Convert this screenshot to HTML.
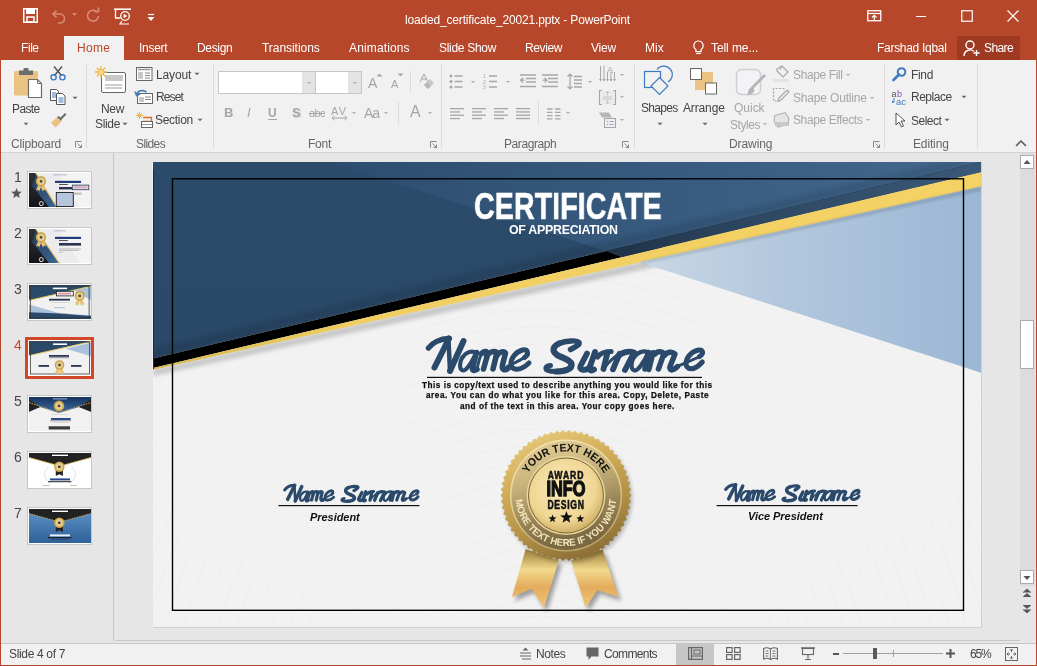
<!DOCTYPE html>
<html><head><meta charset="utf-8">
<style>
*{margin:0;padding:0;box-sizing:border-box}
html,body{width:1037px;height:666px;overflow:hidden;background:#E6E6E6;font-family:"Liberation Sans",sans-serif}
.a{position:absolute}
.t{position:absolute;white-space:nowrap;line-height:1;-webkit-font-smoothing:antialiased}
body{-webkit-font-smoothing:antialiased}
.t{will-change:transform}
svg.a{overflow:visible;will-change:transform}
</style></head>
<body>
<div class="a" style="left:0px;top:0px;width:1037px;height:60px;background:#B7472A"></div>
<div class="t" style="left:404.50px;top:14.44px;font-size:12px;color:#fff;font-weight:normal;font-style:normal;font-family:'Liberation Sans',sans-serif;letter-spacing:-0.170px;">loaded_certificate_20021.pptx - PowerPoint</div>
<svg class="a" style="left:23px;top:8px;" width="15" height="15" viewBox="0 0 15 15"><path d="M0.75 0.75h13.5v13.5h-13.5z" fill="none" stroke="#fff" stroke-width="1.5"/><rect x="3" y="1" width="9" height="5" fill="#fff"/><rect x="4" y="9" width="7" height="5" fill="none" stroke="#fff" stroke-width="1.5"/></svg>
<svg class="a" style="left:51px;top:9px;" width="16" height="13" viewBox="0 0 16 13"><path d="M2 5h7a4.5 4.5 0 0 1 0 9h-2" fill="none" stroke="#D98B77" stroke-width="1.6"/><path d="M5.5 1.5L2 5l3.5 3.5" fill="none" stroke="#D98B77" stroke-width="1.6"/></svg>
<svg class="a" style="left:72px;top:13px;" width="6" height="4" viewBox="0 0 6 4"><path d="M0 0h5l-2.5 3z" fill="#D98B77"/></svg>
<svg class="a" style="left:86px;top:8px;" width="15" height="15" viewBox="0 0 15 15"><path d="M11.5 4.5A5.5 5.5 0 1 0 12.5 8" fill="none" stroke="#D98B77" stroke-width="1.6"/><path d="M8 3.5h4.5v-4" fill="none" stroke="#D98B77" stroke-width="1.6"/></svg>
<svg class="a" style="left:114px;top:8px;" width="18" height="17" viewBox="0 0 18 17"><path d="M0 1.2h17" stroke="#fff" stroke-width="1.6"/><path d="M1.5 1v9h5" fill="none" stroke="#fff" stroke-width="1.3"/><circle cx="11" cy="8" r="4.3" fill="none" stroke="#fff" stroke-width="1.3"/><path d="M9.6 5.7v4.6l3.6-2.3z" fill="#fff"/><path d="M8 13l-2 3h9" fill="none" stroke="#fff" stroke-width="1.2"/></svg>
<svg class="a" style="left:147px;top:13px;" width="8" height="9" viewBox="0 0 8 9"><path d="M1 1.5h6" stroke="#fff" stroke-width="1.2"/><path d="M0.5 4h7l-3.5 4z" fill="#fff"/></svg>
<svg class="a" style="left:867px;top:10px;" width="15" height="12" viewBox="0 0 15 12"><rect x="0.75" y="0.75" width="13" height="10" fill="none" stroke="#fff" stroke-width="1.3"/><path d="M1 3.5h13" stroke="#fff" stroke-width="1.2"/><path d="M7.25 10V5.5M5 7.5l2.25-2.2 2.25 2.2" fill="none" stroke="#fff" stroke-width="1.2"/></svg>
<div class="a" style="left:916px;top:16px;width:10px;height:1px;background:#fff"></div>
<svg class="a" style="left:961px;top:10px;" width="12" height="12" viewBox="0 0 12 12"><rect x="0.75" y="0.75" width="10.5" height="10.5" fill="none" stroke="#fff" stroke-width="1.2"/></svg>
<svg class="a" style="left:1007px;top:10px;" width="12" height="12" viewBox="0 0 12 12"><path d="M0.5 0.5l11 11M11.5 0.5l-11 11" stroke="#fff" stroke-width="1.2"/></svg>
<div class="a" style="left:64px;top:36px;width:60px;height:25px;background:#F1F1F1"></div>
<div class="t" style="left:21.30px;top:42.34px;font-size:12px;color:#fff;font-weight:normal;font-style:normal;font-family:'Liberation Sans',sans-serif;letter-spacing:-0.434px;">File</div>
<div class="t" style="left:139.20px;top:42.34px;font-size:12px;color:#fff;font-weight:normal;font-style:normal;font-family:'Liberation Sans',sans-serif;letter-spacing:-0.285px;">Insert</div>
<div class="t" style="left:197.30px;top:42.34px;font-size:12px;color:#fff;font-weight:normal;font-style:normal;font-family:'Liberation Sans',sans-serif;letter-spacing:-0.325px;">Design</div>
<div class="t" style="left:262.00px;top:42.34px;font-size:12px;color:#fff;font-weight:normal;font-style:normal;font-family:'Liberation Sans',sans-serif;letter-spacing:-0.049px;">Transitions</div>
<div class="t" style="left:349.00px;top:42.34px;font-size:12px;color:#fff;font-weight:normal;font-style:normal;font-family:'Liberation Sans',sans-serif;letter-spacing:0.134px;">Animations</div>
<div class="t" style="left:438.60px;top:42.34px;font-size:12px;color:#fff;font-weight:normal;font-style:normal;font-family:'Liberation Sans',sans-serif;letter-spacing:-0.293px;">Slide Show</div>
<div class="t" style="left:525.00px;top:42.34px;font-size:12px;color:#fff;font-weight:normal;font-style:normal;font-family:'Liberation Sans',sans-serif;letter-spacing:-0.391px;">Review</div>
<div class="t" style="left:590.80px;top:42.34px;font-size:12px;color:#fff;font-weight:normal;font-style:normal;font-family:'Liberation Sans',sans-serif;letter-spacing:-0.198px;">View</div>
<div class="t" style="left:645.40px;top:42.34px;font-size:12px;color:#fff;font-weight:normal;font-style:normal;font-family:'Liberation Sans',sans-serif;letter-spacing:0.046px;">Mix</div>
<div class="t" style="left:710.60px;top:42.34px;font-size:12px;color:#fff;font-weight:normal;font-style:normal;font-family:'Liberation Sans',sans-serif;letter-spacing:-0.081px;">Tell me...</div>
<div class="t" style="left:877.00px;top:42.34px;font-size:12px;color:#fff;font-weight:normal;font-style:normal;font-family:'Liberation Sans',sans-serif;letter-spacing:-0.290px;">Farshad Iqbal</div>
<div class="t" style="left:77.20px;top:42.34px;font-size:12px;color:#B7472A;font-weight:normal;font-style:normal;font-family:'Liberation Sans',sans-serif;letter-spacing:0.273px;">Home</div>
<svg class="a" style="left:692px;top:40px;" width="13" height="15" viewBox="0 0 13 15"><path d="M6.5 1a4.6 4.6 0 0 0-2.6 8.4v2.2h5.2V9.4A4.6 4.6 0 0 0 6.5 1z" fill="none" stroke="#fff" stroke-width="1.2"/><path d="M4.2 13.5h4.6" stroke="#fff" stroke-width="1.2"/></svg>
<div class="a" style="left:957px;top:36px;width:63px;height:24px;background:#9E3A21"></div>
<svg class="a" style="left:963px;top:40px;" width="18" height="17" viewBox="0 0 18 17"><circle cx="7" cy="5" r="4" fill="none" stroke="#fff" stroke-width="1.4"/><path d="M1 16a6 6 0 0 1 10-4.5" fill="none" stroke="#fff" stroke-width="1.4"/><path d="M13.5 10v6M10.5 13h6" stroke="#fff" stroke-width="1.4"/></svg>
<div class="t" style="left:983.50px;top:42.34px;font-size:12px;color:#fff;font-weight:normal;font-style:normal;font-family:'Liberation Sans',sans-serif;letter-spacing:-0.604px;">Share</div>
<div class="a" style="left:1px;top:60px;width:1035px;height:93px;background:#F1F1F1;border-bottom:1px solid #D4D4D4"></div>
<div class="a" style="left:86px;top:64px;width:1px;height:84px;background:#DADADA"></div>
<div class="a" style="left:213px;top:64px;width:1px;height:84px;background:#DADADA"></div>
<div class="a" style="left:441px;top:64px;width:1px;height:84px;background:#DADADA"></div>
<div class="a" style="left:634px;top:64px;width:1px;height:84px;background:#DADADA"></div>
<div class="a" style="left:884px;top:64px;width:1px;height:84px;background:#DADADA"></div>
<div class="a" style="left:977px;top:64px;width:1px;height:84px;background:#DADADA"></div>
<div class="t" style="left:10.50px;top:137.84px;font-size:12px;color:#666;font-weight:normal;font-style:normal;font-family:'Liberation Sans',sans-serif;letter-spacing:-0.151px;">Clipboard</div>
<svg class="a" style="left:74.5px;top:140.5px;" width="8" height="8" viewBox="0 0 8 8"><path d="M0.5 6.5v-6h6" fill="none" stroke="#888" stroke-width="1"/><path d="M2.5 2.5l4 4M3.5 6.5h3v-3" fill="none" stroke="#888" stroke-width="1"/></svg>
<div class="t" style="left:135.50px;top:137.84px;font-size:12px;color:#666;font-weight:normal;font-style:normal;font-family:'Liberation Sans',sans-serif;letter-spacing:-0.597px;">Slides</div>
<div class="t" style="left:307.60px;top:137.84px;font-size:12px;color:#666;font-weight:normal;font-style:normal;font-family:'Liberation Sans',sans-serif;letter-spacing:-0.253px;">Font</div>
<svg class="a" style="left:430px;top:140.5px;" width="8" height="8" viewBox="0 0 8 8"><path d="M0.5 6.5v-6h6" fill="none" stroke="#888" stroke-width="1"/><path d="M2.5 2.5l4 4M3.5 6.5h3v-3" fill="none" stroke="#888" stroke-width="1"/></svg>
<div class="t" style="left:503.50px;top:137.84px;font-size:12px;color:#666;font-weight:normal;font-style:normal;font-family:'Liberation Sans',sans-serif;letter-spacing:-0.427px;">Paragraph</div>
<svg class="a" style="left:622px;top:140.5px;" width="8" height="8" viewBox="0 0 8 8"><path d="M0.5 6.5v-6h6" fill="none" stroke="#888" stroke-width="1"/><path d="M2.5 2.5l4 4M3.5 6.5h3v-3" fill="none" stroke="#888" stroke-width="1"/></svg>
<div class="t" style="left:729.00px;top:137.84px;font-size:12px;color:#666;font-weight:normal;font-style:normal;font-family:'Liberation Sans',sans-serif;letter-spacing:-0.088px;">Drawing</div>
<svg class="a" style="left:872.5px;top:140.5px;" width="8" height="8" viewBox="0 0 8 8"><path d="M0.5 6.5v-6h6" fill="none" stroke="#888" stroke-width="1"/><path d="M2.5 2.5l4 4M3.5 6.5h3v-3" fill="none" stroke="#888" stroke-width="1"/></svg>
<div class="t" style="left:912.80px;top:137.84px;font-size:12px;color:#666;font-weight:normal;font-style:normal;font-family:'Liberation Sans',sans-serif;letter-spacing:-0.142px;">Editing</div>
<svg class="a" style="left:1015px;top:140px;" width="12" height="8" viewBox="0 0 12 8"><path d="M1 6l5-5 5 5" fill="none" stroke="#555" stroke-width="1.5"/></svg>
<svg class="a" style="left:13px;top:67px;" width="30" height="32" viewBox="0 0 30 32"><rect x="1" y="4" width="24" height="24.5" rx="1.5" fill="#EAC282"/><path d="M6 3.5h14v4.5h-14z" fill="#6D6D6D"/><rect x="10.5" y="1" width="5" height="4" rx="1" fill="#6D6D6D"/><path d="M15.5 12.5h9l4 4v14h-13z" fill="#fff" stroke="#6D6D6D" stroke-width="1.2"/><path d="M24.5 12.5v4h4" fill="none" stroke="#6D6D6D" stroke-width="1"/></svg>
<div class="t" style="left:12.40px;top:102.74px;font-size:12px;color:#444;font-weight:normal;font-style:normal;font-family:'Liberation Sans',sans-serif;letter-spacing:-0.617px;">Paste</div>
<svg class="a" style="left:21.5px;top:121px;" width="8" height="6" viewBox="0 0 8 6"><path d="M1.5 1.75h5.0l-2.5 2.5z" fill="#666"/></svg>
<svg class="a" style="left:50px;top:66px;" width="16" height="15" viewBox="0 0 16 15"><path d="M4 0.5l7.5 9M12 0.5l-7.5 9" stroke="#555" stroke-width="1.5"/><circle cx="3.6" cy="11.3" r="2.6" fill="none" stroke="#3E7AC0" stroke-width="1.4"/><circle cx="12.4" cy="11.3" r="2.6" fill="none" stroke="#3E7AC0" stroke-width="1.4"/></svg>
<svg class="a" style="left:50px;top:89px;" width="16" height="16" viewBox="0 0 16 16"><path d="M0.5 0.5h6l2 2v9h-8z" fill="#fff" stroke="#555" stroke-width="1"/><path d="M6.5 4.5h6l2.5 2.5v8.5h-8.5z" fill="#fff" stroke="#555" stroke-width="1"/><path d="M2 4h4M2 6h4M2 8h4M8.5 9h5M8.5 11h5M8.5 13h5" stroke="#3E7AC0" stroke-width="1"/></svg>
<svg class="a" style="left:70.5px;top:95px;" width="8" height="6" viewBox="0 0 8 6"><path d="M1.5 1.75h5.0l-2.5 2.5z" fill="#666"/></svg>
<svg class="a" style="left:50px;top:112px;" width="17" height="16" viewBox="0 0 17 16"><path d="M10 6l5-5 1.5 1.5-5 5z" fill="#6D6D6D"/><path d="M1 11l6-6 4.5 4.5-6 6z" fill="#EAC282"/><path d="M7 5l2-1 3 3-1 2z" fill="#6D6D6D"/></svg>
<svg class="a" style="left:95px;top:66px;" width="32" height="28" viewBox="0 0 32 28"><rect x="6.5" y="6.5" width="24" height="20" rx="1.5" fill="#fff" stroke="#666" stroke-width="1"/><rect x="10" y="9" width="18" height="6" fill="#C8C8C8"/><path d="M10 19h17M10 22h17" stroke="#999" stroke-width="1"/><g stroke="#F0B74A" stroke-width="1.3"><path d="M6 0v12M0 6h12M1.8 1.8l8.4 8.4M10.2 1.8l-8.4 8.4"/></g><circle cx="6" cy="6" r="3" fill="#F7D58E" stroke="#F0B74A"/></svg>
<div class="t" style="left:100.50px;top:102.84px;font-size:12px;color:#444;font-weight:normal;font-style:normal;font-family:'Liberation Sans',sans-serif;letter-spacing:-0.335px;">New</div>
<div class="t" style="left:95.00px;top:118.34px;font-size:12px;color:#444;font-weight:normal;font-style:normal;font-family:'Liberation Sans',sans-serif;letter-spacing:-0.337px;">Slide</div>
<svg class="a" style="left:121px;top:121px;" width="8" height="6" viewBox="0 0 8 6"><path d="M1.5 1.75h5.0l-2.5 2.5z" fill="#666"/></svg>
<svg class="a" style="left:136px;top:67px;" width="17" height="14" viewBox="0 0 17 14"><rect x="0.5" y="0.5" width="15.5" height="13" fill="#fff" stroke="#666" stroke-width="1"/><path d="M2 2.5h12.5" stroke="#999" stroke-width="1.5"/><rect x="2" y="5" width="5" height="7" fill="#C8C8C8"/><path d="M9 6h5M9 8.5h5M9 11h5" stroke="#888" stroke-width="1"/></svg>
<div class="t" style="left:155.70px;top:68.64px;font-size:12px;color:#444;font-weight:normal;font-style:normal;font-family:'Liberation Sans',sans-serif;letter-spacing:-0.155px;">Layout</div>
<svg class="a" style="left:193px;top:71px;" width="8" height="6" viewBox="0 0 8 6"><path d="M1.5 1.75h5.0l-2.5 2.5z" fill="#666"/></svg>
<svg class="a" style="left:135px;top:89px;" width="18" height="15" viewBox="0 0 18 15"><rect x="2.5" y="4.5" width="15" height="10" fill="#fff" stroke="#666" stroke-width="1"/><rect x="4" y="8" width="5" height="5" fill="#C8C8C8"/><path d="M10 8h6M10 10.5h6" stroke="#888" stroke-width="1"/><path d="M1.5 5.5a6 5 0 0 1 10-2.5" fill="none" stroke="#3E7AC0" stroke-width="1.6"/><path d="M0 2.5l1.5 4 3.5-1.5" fill="none" stroke="#3E7AC0" stroke-width="1.4"/></svg>
<div class="t" style="left:155.70px;top:91.24px;font-size:12px;color:#444;font-weight:normal;font-style:normal;font-family:'Liberation Sans',sans-serif;letter-spacing:-0.869px;">Reset</div>
<svg class="a" style="left:136px;top:112px;" width="17" height="16" viewBox="0 0 17 16"><g stroke="#F0B74A" stroke-width="1"><path d="M3.5 0v7M0 3.5h7M1 1l5 5M6 1l-5 5"/></g><path d="M7 5.5h8.5v4h-8.5" fill="none" stroke="#E07020" stroke-width="1.3"/><rect x="5.5" y="9.5" width="11" height="6" fill="#fff" stroke="#666" stroke-width="1"/><path d="M6 12.5h10" stroke="#999"/></svg>
<div class="t" style="left:155.30px;top:114.44px;font-size:12px;color:#444;font-weight:normal;font-style:normal;font-family:'Liberation Sans',sans-serif;letter-spacing:-0.289px;">Section</div>
<svg class="a" style="left:195.5px;top:117px;" width="8" height="6" viewBox="0 0 8 6"><path d="M1.5 1.75h5.0l-2.5 2.5z" fill="#666"/></svg>
<div class="a" style="left:218px;top:71px;width:144px;height:23px;background:#fff;border:1px solid #C6C6C6"></div>
<div class="a" style="left:302px;top:72px;width:13px;height:21px;background:#E3E3E3"></div>
<div class="a" style="left:315px;top:72px;width:1px;height:21px;background:#C6C6C6"></div>
<div class="a" style="left:348px;top:72px;width:13px;height:21px;background:#E3E3E3"></div>
<svg class="a" style="left:304.5px;top:80px;" width="8" height="6" viewBox="0 0 8 6"><path d="M1.7999999999999998 1.9h4.4l-2.2 2.2z" fill="#B0B0B0"/></svg>
<svg class="a" style="left:350.5px;top:80px;" width="8" height="6" viewBox="0 0 8 6"><path d="M1.7999999999999998 1.9h4.4l-2.2 2.2z" fill="#B0B0B0"/></svg>
<div class="t" style="left:368.00px;top:76.34px;font-size:14px;color:#A6A6A6;font-weight:normal;font-style:normal;font-family:'Liberation Sans',sans-serif;letter-spacing:0.662px;">A</div>
<svg class="a" style="left:376px;top:73px;" width="7" height="4" viewBox="0 0 7 4"><path d="M0.5 3.5l3-3 3 3z" fill="#A6A6A6"/></svg>
<div class="t" style="left:391.30px;top:78.89px;font-size:11px;color:#A6A6A6;font-weight:normal;font-style:normal;font-family:'Liberation Sans',sans-serif;letter-spacing:0.362px;">A</div>
<svg class="a" style="left:397px;top:73px;" width="7" height="4" viewBox="0 0 7 4"><path d="M0.5 0.5h6l-3 3z" fill="#A6A6A6"/></svg>
<div class="a" style="left:410px;top:71px;width:1px;height:21px;background:#DADADA"></div>
<svg class="a" style="left:419px;top:74px;" width="16" height="16" viewBox="0 0 16 16"><path d="M1 8l4-8 4 8M2.5 5h5" fill="none" stroke="#A6A6A6" stroke-width="1"/><path d="M5 11l6-6 4 4-6 6z" fill="#C8C8C8"/><path d="M5 11l3-3 4 4-3 3z" fill="#B8B8B8"/></svg>
<div class="t" style="left:224.30px;top:106.39px;font-size:13px;color:#A6A6A6;font-weight:bold;font-style:normal;font-family:'Liberation Sans',sans-serif;letter-spacing:-0.688px;">B</div>
<div class="t" style="left:246.70px;top:106.39px;font-size:13px;color:#A6A6A6;font-weight:normal;font-style:italic;font-family:'Liberation Sans',sans-serif;letter-spacing:3.688px;">I</div>
<div class="t" style="left:268.20px;top:107.24px;font-size:12px;color:#A6A6A6;font-weight:bold;font-style:normal;font-family:'Liberation Sans',sans-serif;letter-spacing:0.234px;">U</div>
<div class="a" style="left:268px;top:119px;width:9px;height:1px;background:#A6A6A6"></div>
<div class="t" style="left:291.50px;top:106.39px;font-size:13px;color:#A6A6A6;font-weight:bold;font-style:normal;font-family:'Liberation Sans',sans-serif;letter-spacing:0.230px;text-shadow:1px 1px 1px #CFCFCF">S</div>
<div class="t" style="left:309.30px;top:108.09px;font-size:11px;color:#A6A6A6;font-weight:normal;font-style:normal;font-family:'Liberation Sans',sans-serif;letter-spacing:-0.611px;">abc</div>
<div class="a" style="left:309px;top:113px;width:16px;height:1px;background:#A6A6A6"></div>
<div class="t" style="left:331.00px;top:105.69px;font-size:11px;color:#A6A6A6;font-weight:normal;font-style:normal;font-family:'Liberation Sans',sans-serif;letter-spacing:1.270px;">AV</div>
<svg class="a" style="left:331px;top:115px;" width="17" height="6" viewBox="0 0 17 6"><path d="M1 3h15M3.5 0.8L1 3l2.5 2.2M13.5 0.8L16 3l-2.5 2.2" fill="none" stroke="#A6A6A6" stroke-width="1"/></svg>
<svg class="a" style="left:349.6px;top:110px;" width="8" height="6" viewBox="0 0 8 6"><path d="M1.7999999999999998 1.9h4.4l-2.2 2.2z" fill="#B0B0B0"/></svg>
<div class="t" style="left:364.00px;top:105.54px;font-size:14px;color:#A6A6A6;font-weight:normal;font-style:normal;font-family:'Liberation Sans',sans-serif;letter-spacing:-1.012px;">Aa</div>
<svg class="a" style="left:382.2px;top:110px;" width="8" height="6" viewBox="0 0 8 6"><path d="M1.7999999999999998 1.9h4.4l-2.2 2.2z" fill="#B0B0B0"/></svg>
<div class="a" style="left:398px;top:102px;width:1px;height:22px;background:#DADADA"></div>
<div class="t" style="left:409.70px;top:104.45px;font-size:16px;color:#A6A6A6;font-weight:normal;font-style:normal;font-family:'Liberation Sans',sans-serif;letter-spacing:-1.372px;">A</div>
<svg class="a" style="left:426px;top:110px;" width="8" height="6" viewBox="0 0 8 6"><path d="M1.7999999999999998 1.9h4.4l-2.2 2.2z" fill="#B0B0B0"/></svg>
<svg class="a" style="left:449px;top:74px;" width="15" height="15" viewBox="0 0 15 15"><circle cx="2" cy="2" r="1.5" fill="#A6A6A6"/><circle cx="2" cy="7.5" r="1.5" fill="#A6A6A6"/><circle cx="2" cy="13" r="1.5" fill="#A6A6A6"/><path d="M5.5 2h8M5.5 7.5h8M5.5 13h8" stroke="#A6A6A6" stroke-width="1.3"/></svg>
<svg class="a" style="left:469.4px;top:79px;" width="8" height="6" viewBox="0 0 8 6"><path d="M1.7999999999999998 1.9h4.4l-2.2 2.2z" fill="#B0B0B0"/></svg>
<svg class="a" style="left:483px;top:73px;" width="15" height="16" viewBox="0 0 15 16"><text x="0" y="5" font-size="5" fill="#A6A6A6" font-family="Liberation Sans">1</text><text x="0" y="10.5" font-size="5" fill="#A6A6A6" font-family="Liberation Sans">2</text><text x="0" y="16" font-size="5" fill="#A6A6A6" font-family="Liberation Sans">3</text><path d="M6 3h8M6 8.5h8M6 14h8" stroke="#A6A6A6" stroke-width="1.3"/></svg>
<svg class="a" style="left:503.5px;top:79px;" width="8" height="6" viewBox="0 0 8 6"><path d="M1.7999999999999998 1.9h4.4l-2.2 2.2z" fill="#B0B0B0"/></svg>
<svg class="a" style="left:520px;top:74px;" width="16" height="14" viewBox="0 0 16 14"><path d="M0 1h16M6 4.5h10M6 8h10M0 12.5h16" stroke="#A6A6A6" stroke-width="1.3"/><path d="M5 6.2H0.5M3 3.8L0.5 6.2 3 8.6" fill="none" stroke="#A6A6A6" stroke-width="1.3"/></svg>
<svg class="a" style="left:542px;top:74px;" width="16" height="14" viewBox="0 0 16 14"><path d="M0 1h16M6 4.5h10M6 8h10M0 12.5h16" stroke="#A6A6A6" stroke-width="1.3"/><path d="M0.5 6.2H5M2.5 3.8L5 6.2 2.5 8.6" fill="none" stroke="#A6A6A6" stroke-width="1.3"/></svg>
<svg class="a" style="left:567px;top:73px;" width="16" height="17" viewBox="0 0 16 17"><path d="M3 1v15M0.5 3.5L3 1l2.5 2.5M0.5 13.5L3 16l2.5-2.5" fill="none" stroke="#A6A6A6" stroke-width="1.2"/><path d="M7 3.5h8M7 7h8M7 10.5h8M7 14h8" stroke="#A6A6A6" stroke-width="1.3"/></svg>
<svg class="a" style="left:585.5px;top:79px;" width="8" height="6" viewBox="0 0 8 6"><path d="M1.7999999999999998 1.9h4.4l-2.2 2.2z" fill="#B0B0B0"/></svg>
<svg class="a" style="left:599px;top:66px;" width="17" height="17" viewBox="0 0 17 17"><path d="M1.5 0v15M5 0v15M8.5 6v9M12 6v9" stroke="#A6A6A6" stroke-width="1"/><path d="M0 13l1.5 2.5L3 13M3.5 13L5 15.5 6.5 13M7 13l1.5 2.5L10 13M10.5 13l1.5 2.5 1.5-2.5M14 13l1.5 2.5 1.5-2.5" fill="#A6A6A6"/><path d="M15.5 6v9" stroke="#A6A6A6" stroke-width="1"/><text x="8" y="7" font-size="9" fill="#A6A6A6" font-family="Liberation Sans">A</text></svg>
<svg class="a" style="left:618.3px;top:71.5px;" width="8" height="6" viewBox="0 0 8 6"><path d="M1.7999999999999998 1.9h4.4l-2.2 2.2z" fill="#B0B0B0"/></svg>
<svg class="a" style="left:599px;top:90px;" width="17" height="15" viewBox="0 0 17 15"><path d="M3 0.5H0.5v14H3M14 0.5h2.5v14H14" fill="none" stroke="#A6A6A6" stroke-width="1.1"/><path d="M4 7h9M4 9h9" stroke="#A6A6A6" stroke-width="1"/><path d="M8.5 5.5V1M6.5 3l2-2 2 2M8.5 10v4M6.5 12l2 2 2-2" fill="none" stroke="#A6A6A6" stroke-width="1"/><rect x="1" y="1" width="15" height="13" fill="#E9E3EC" opacity="0.5"/></svg>
<svg class="a" style="left:618.3px;top:94px;" width="8" height="6" viewBox="0 0 8 6"><path d="M1.7999999999999998 1.9h4.4l-2.2 2.2z" fill="#B0B0B0"/></svg>
<svg class="a" style="left:599px;top:112px;" width="17" height="16" viewBox="0 0 17 16"><path d="M0 0.5h10l3 5H3z" fill="#B5B5B5"/><rect x="5.5" y="6.5" width="11" height="9" fill="#F0EAF2" stroke="#A6A6A6" stroke-width="1"/><path d="M8 9.5h1M10.5 9.5h4M8 12.5h1M10.5 12.5h4" stroke="#A6A6A6" stroke-width="1"/></svg>
<svg class="a" style="left:618.3px;top:117px;" width="8" height="6" viewBox="0 0 8 6"><path d="M1.7999999999999998 1.9h4.4l-2.2 2.2z" fill="#B0B0B0"/></svg>
<svg class="a" style="left:449.6px;top:108px;" width="14" height="13.2" viewBox="0 0 14 13.2"><rect x="0" y="0.0" width="14" height="1.3" fill="#A6A6A6"/><rect x="0" y="3.3" width="10" height="1.3" fill="#A6A6A6"/><rect x="0" y="6.6" width="14" height="1.3" fill="#A6A6A6"/><rect x="0" y="9.899999999999999" width="10" height="1.3" fill="#A6A6A6"/></svg>
<svg class="a" style="left:472px;top:108px;" width="14" height="13.2" viewBox="0 0 14 13.2"><rect x="0" y="0.0" width="14" height="1.3" fill="#A6A6A6"/><rect x="0" y="3.3" width="10" height="1.3" fill="#A6A6A6"/><rect x="0" y="6.6" width="14" height="1.3" fill="#A6A6A6"/><rect x="0" y="9.899999999999999" width="10" height="1.3" fill="#A6A6A6"/></svg>
<svg class="a" style="left:494px;top:108px;" width="14" height="13.2" viewBox="0 0 14 13.2"><rect x="0" y="0.0" width="14" height="1.3" fill="#A6A6A6"/><rect x="0" y="3.3" width="10" height="1.3" fill="#A6A6A6"/><rect x="0" y="6.6" width="14" height="1.3" fill="#A6A6A6"/><rect x="0" y="9.899999999999999" width="10" height="1.3" fill="#A6A6A6"/></svg>
<svg class="a" style="left:516px;top:108px;" width="14" height="13.2" viewBox="0 0 14 13.2"><rect x="0" y="0.0" width="14" height="1.3" fill="#A6A6A6"/><rect x="0" y="3.3" width="14" height="1.3" fill="#A6A6A6"/><rect x="0" y="6.6" width="14" height="1.3" fill="#A6A6A6"/><rect x="0" y="9.899999999999999" width="14" height="1.3" fill="#A6A6A6"/></svg>
<svg class="a" style="left:472px;top:108px;" width="14" height="14" viewBox="0 0 14 14"></svg>
<div class="a" style="left:538px;top:102px;width:1px;height:22px;background:#DADADA"></div>
<svg class="a" style="left:547px;top:108px;" width="14" height="12" viewBox="0 0 14 12"><path d="M0 1h5.5M8 1h5.5M0 4.3h5.5M8 4.3h5.5M0 7.6h5.5M8 7.6h5.5M0 10.9h5.5M8 10.9h5.5" stroke="#A6A6A6" stroke-width="1.3"/></svg>
<svg class="a" style="left:564.3px;top:110px;" width="8" height="6" viewBox="0 0 8 6"><path d="M1.7999999999999998 1.9h4.4l-2.2 2.2z" fill="#B0B0B0"/></svg>
<svg class="a" style="left:643px;top:66px;" width="33" height="31" viewBox="0 0 33 31"><rect x="1.5" y="5.5" width="16" height="16" fill="none" stroke="#3E7AC0" stroke-width="1.2"/><path d="M14 3.5A8.5 8.5 0 1 1 25 16" fill="none" stroke="#3E7AC0" stroke-width="1.2"/><path d="M16.5 11.5l8.5 8.5-8.5 8.5-8.5-8.5z" fill="#F1F1F1" stroke="#3E7AC0" stroke-width="1.2"/></svg>
<div class="t" style="left:640.80px;top:102.44px;font-size:12px;color:#444;font-weight:normal;font-style:normal;font-family:'Liberation Sans',sans-serif;letter-spacing:-0.666px;">Shapes</div>
<svg class="a" style="left:655.5px;top:121px;" width="8" height="6" viewBox="0 0 8 6"><path d="M1.5 1.75h5.0l-2.5 2.5z" fill="#666"/></svg>
<svg class="a" style="left:690px;top:68px;" width="28" height="27" viewBox="0 0 28 27"><rect x="5" y="4" width="18" height="18" fill="#EAC282"/><rect x="0.5" y="0.5" width="11" height="11" fill="#fff" stroke="#666" stroke-width="1"/><rect x="15.5" y="15" width="11" height="11" fill="#fff" stroke="#666" stroke-width="1"/></svg>
<div class="t" style="left:683.00px;top:102.44px;font-size:12px;color:#444;font-weight:normal;font-style:normal;font-family:'Liberation Sans',sans-serif;letter-spacing:-0.142px;">Arrange</div>
<svg class="a" style="left:700.7px;top:121px;" width="8" height="6" viewBox="0 0 8 6"><path d="M1.5 1.75h5.0l-2.5 2.5z" fill="#666"/></svg>
<svg class="a" style="left:735px;top:68px;" width="32" height="29" viewBox="0 0 32 29"><rect x="1.5" y="1.5" width="24" height="25" rx="5" fill="#F5F2F7" stroke="#CFCFCF" stroke-width="1.5"/><path d="M29 6l2 2-12 12-3-1z" fill="#B5B5B5"/><path d="M17 19a4 4 0 0 1 2 5c-2 2-5 3-7 3 1-2 1-5 3-7z" fill="#B5B5B5"/></svg>
<div class="t" style="left:734.40px;top:102.44px;font-size:12px;color:#A6A6A6;font-weight:normal;font-style:normal;font-family:'Liberation Sans',sans-serif;letter-spacing:-0.015px;">Quick</div>
<div class="t" style="left:730.00px;top:118.54px;font-size:12px;color:#A6A6A6;font-weight:normal;font-style:normal;font-family:'Liberation Sans',sans-serif;letter-spacing:-0.446px;">Styles</div>
<svg class="a" style="left:761px;top:121px;" width="8" height="6" viewBox="0 0 8 6"><path d="M1.7999999999999998 1.9h4.4l-2.2 2.2z" fill="#B0B0B0"/></svg>
<svg class="a" style="left:773px;top:65px;" width="17" height="17" viewBox="0 0 17 17"><path d="M4 4l5-3 6 6-5 5-6-6z" fill="none" stroke="#A6A6A6" stroke-width="1.2"/><path d="M9 1L7 5" stroke="#A6A6A6"/><rect x="0" y="14" width="16" height="3" fill="#E5E0EA"/></svg>
<div class="t" style="left:793.20px;top:69.14px;font-size:12px;color:#A6A6A6;font-weight:normal;font-style:normal;font-family:'Liberation Sans',sans-serif;letter-spacing:-0.376px;">Shape Fill</div>
<svg class="a" style="left:844px;top:72px;" width="8" height="6" viewBox="0 0 8 6"><path d="M1.7999999999999998 1.9h4.4l-2.2 2.2z" fill="#B0B0B0"/></svg>
<svg class="a" style="left:773px;top:88px;" width="17" height="14" viewBox="0 0 17 14"><path d="M7 13H0.5V0.5h11" fill="none" stroke="#A6A6A6" stroke-width="1.2" stroke-dasharray="2 1.5"/><path d="M6 10l8-8 2 2-8 8-3 1z" fill="none" stroke="#A6A6A6" stroke-width="1.2"/></svg>
<div class="t" style="left:793.20px;top:92.04px;font-size:12px;color:#A6A6A6;font-weight:normal;font-style:normal;font-family:'Liberation Sans',sans-serif;letter-spacing:-0.173px;">Shape Outline</div>
<svg class="a" style="left:868px;top:95px;" width="8" height="6" viewBox="0 0 8 6"><path d="M1.7999999999999998 1.9h4.4l-2.2 2.2z" fill="#B0B0B0"/></svg>
<svg class="a" style="left:773px;top:112px;" width="17" height="15" viewBox="0 0 17 15"><path d="M3 2h11l2 6-2 6H3l-2-6z" fill="#E5E5E5" stroke="#B5B5B5" stroke-width="1.2" transform="rotate(-15 8 8)"/><path d="M3 10h12l1 4H2z" fill="#C8C8C8"/></svg>
<div class="t" style="left:793.20px;top:114.44px;font-size:12px;color:#A6A6A6;font-weight:normal;font-style:normal;font-family:'Liberation Sans',sans-serif;letter-spacing:-0.392px;">Shape Effects</div>
<svg class="a" style="left:864px;top:117px;" width="8" height="6" viewBox="0 0 8 6"><path d="M1.7999999999999998 1.9h4.4l-2.2 2.2z" fill="#B0B0B0"/></svg>
<svg class="a" style="left:892px;top:67px;" width="15" height="14" viewBox="0 0 15 14"><circle cx="9.5" cy="5" r="3.8" fill="none" stroke="#3E7AC0" stroke-width="2"/><path d="M7 7.5l-5.5 5.5" stroke="#3E7AC0" stroke-width="2.6" stroke-linecap="round"/></svg>
<div class="t" style="left:911.30px;top:68.74px;font-size:12px;color:#444;font-weight:normal;font-style:normal;font-family:'Liberation Sans',sans-serif;letter-spacing:-0.311px;">Find</div>
<svg class="a" style="left:891px;top:89px;" width="18" height="16" viewBox="0 0 18 16"><text x="0.5" y="7.5" font-size="9" fill="#555" font-family="Liberation Sans">a</text><text x="6" y="7.5" font-size="9" fill="#8A4FB0" font-family="Liberation Sans">b</text><text x="5" y="15.5" font-size="9.5" fill="#3E7AC0" font-family="Liberation Sans">ac</text><path d="M3 9v4h-2M2 12l-1 1 1 1" fill="none" stroke="#3E7AC0" stroke-width="1"/></svg>
<div class="t" style="left:911.30px;top:91.44px;font-size:12px;color:#444;font-weight:normal;font-style:normal;font-family:'Liberation Sans',sans-serif;letter-spacing:-0.489px;">Replace</div>
<svg class="a" style="left:960.4px;top:94px;" width="8" height="6" viewBox="0 0 8 6"><path d="M1.5 1.75h5.0l-2.5 2.5z" fill="#666"/></svg>
<svg class="a" style="left:895px;top:112px;" width="11" height="16" viewBox="0 0 11 16"><path d="M1 1v12l3-3 2.5 5 2-1-2.5-5h4z" fill="#fff" stroke="#555" stroke-width="1"/></svg>
<div class="t" style="left:911.30px;top:114.74px;font-size:12px;color:#444;font-weight:normal;font-style:normal;font-family:'Liberation Sans',sans-serif;letter-spacing:-0.525px;">Select</div>
<svg class="a" style="left:943.4px;top:117px;" width="8" height="6" viewBox="0 0 8 6"><path d="M1.5 1.75h5.0l-2.5 2.5z" fill="#666"/></svg>
<div class="a" style="left:1px;top:153px;width:1035px;height:490px;background:#E6E6E6"></div>
<div class="a" style="left:113px;top:153px;width:1px;height:488px;background:#C6C6C6"></div>
<div class="a" style="left:116px;top:640px;width:904px;height:1px;background:#C6C6C6"></div>
<div class="t" style="left:13.50px;top:169.64px;font-size:14px;color:#444;font-weight:normal;font-style:normal;font-family:'Liberation Sans',sans-serif;letter-spacing:-0.286px;">1</div>
<div class="a" style="left:27px;top:171px;width:65px;height:38px;border:1px solid #C6C6C6;background:#fff"></div>
<svg class="a" style="left:29px;top:173px;" width="62" height="34" viewBox="0 0 62 34"><defs><linearGradient id="t1d" x1="0" y1="0" x2="0" y2="1"><stop offset="0" stop-color="#2C3038"/><stop offset="1" stop-color="#131417"/></linearGradient><linearGradient id="t1b" x1="0" y1="0" x2="1" y2="1"><stop offset="0" stop-color="#24384F"/><stop offset="1" stop-color="#3B6A9A"/></linearGradient></defs><rect width="62" height="34" fill="#ECECEC"/><path d="M30 0h32v34H50z" fill="#F3F3F3"/><path d="M0 0h6.8L27.5 34H0z" fill="url(#t1d)"/><path d="M3 13L6.8 0 27.5 34H20z" fill="url(#t1b)"/><path d="M6.8 0L28 34.5" stroke="#E9C25A" stroke-width="1.2"/><path d="M9.5 11.3l-2.5 6 2-0.5 1.2 1.8 2.5-6zM14.5 11.3l2.5 6-2 -0.5-1.2 1.8-2.5-6z" fill="#E8C27A"/><circle cx="12" cy="8.3" r="5.2" fill="#C9A452"/><circle cx="12" cy="8.3" r="3.64" fill="#E6CD8A"/><rect x="10.8" y="7.1000000000000005" width="2.4" height="2.4" fill="#444"/><circle cx="12.3" cy="30.6" r="2" fill="none" stroke="#fff" stroke-width="0.9"/><rect x="24" y="1.5" width="14" height="0.8" fill="#9AAAC8"/><rect x="26" y="7.8" width="26" height="2.2" fill="#1F3E7A"/><rect x="30" y="11.2" width="9" height="0.8" fill="#333"/><rect x="30" y="14" width="13" height="2.4" fill="#2A3550"/><rect x="43.3" y="12.1" width="16.5" height="4.6" fill="#D8DCEC" stroke="#2A3A50" stroke-width="0.8"/><rect x="45" y="13.5" width="13" height="1.6" fill="#E6A0B8"/><rect x="27.3" y="19.5" width="17" height="14" fill="#B5C5DC" stroke="#1A1A1A" stroke-width="0.9"/><rect x="44.6" y="19.6" width="8" height="2" fill="#BBB"/></svg>
<div class="t" style="left:13.50px;top:225.64px;font-size:14px;color:#444;font-weight:normal;font-style:normal;font-family:'Liberation Sans',sans-serif;letter-spacing:-0.286px;">2</div>
<div class="a" style="left:27px;top:227px;width:65px;height:38px;border:1px solid #C6C6C6;background:#fff"></div>
<svg class="a" style="left:29px;top:229px;" width="62" height="34" viewBox="0 0 62 34"><defs><linearGradient id="t2d" x1="0" y1="0" x2="0" y2="1"><stop offset="0" stop-color="#2C3038"/><stop offset="1" stop-color="#131417"/></linearGradient><linearGradient id="t2b" x1="0" y1="0" x2="1" y2="1"><stop offset="0" stop-color="#24384F"/><stop offset="1" stop-color="#3B6A9A"/></linearGradient></defs><rect width="62" height="34" fill="#ECECEC"/><path d="M30 0h32v34H50z" fill="#F3F3F3"/><path d="M0 0h6.8L30 34H0z" fill="url(#t2d)"/><path d="M3 13L6.8 0 30 34H20z" fill="url(#t2b)"/><path d="M6.8 0L30.5 34.5" stroke="#E9C25A" stroke-width="1.2"/><path d="M9.5 11.3l-2.5 6 2-0.5 1.2 1.8 2.5-6zM14.5 11.3l2.5 6-2 -0.5-1.2 1.8-2.5-6z" fill="#E8C27A"/><circle cx="12" cy="8.3" r="5.2" fill="#C9A452"/><circle cx="12" cy="8.3" r="3.64" fill="#E6CD8A"/><rect x="10.8" y="7.1000000000000005" width="2.4" height="2.4" fill="#444"/><circle cx="12.3" cy="30.6" r="2" fill="none" stroke="#fff" stroke-width="0.9"/><rect x="25" y="1.5" width="12" height="0.8" fill="#9AAAC8"/><rect x="26" y="7.8" width="26" height="2.2" fill="#1F3E7A"/><rect x="30" y="11.2" width="9" height="0.8" fill="#333"/><rect x="30" y="14" width="22" height="2.6" fill="#2A3550"/><rect x="30" y="19.6" width="22" height="0.8" fill="#AAA"/><rect x="30" y="21.2" width="20" height="0.8" fill="#BBB"/><rect x="30" y="22.8" width="4" height="0.8" fill="#BBB"/></svg>
<div class="t" style="left:13.50px;top:281.64px;font-size:14px;color:#444;font-weight:normal;font-style:normal;font-family:'Liberation Sans',sans-serif;letter-spacing:-0.286px;">3</div>
<div class="a" style="left:27px;top:283px;width:65px;height:38px;border:1px solid #C6C6C6;background:#fff"></div>
<svg class="a" style="left:29px;top:285px;" width="62" height="34" viewBox="0 0 62 34"><rect width="62" height="34" fill="#F1F1F1"/><path d="M0 0h62v1.2L0 15.4z" fill="#2B4A69"/><path d="M44.9 5.3L62 1.2v14z" fill="#A9C1DA"/><path d="M0 15.4L62 1.2" stroke="#E6C45A" stroke-width="1"/><path d="M0 19.6L33.3 28.9 62 30V34H0z" fill="#A9C1DA"/><path d="M0 27.3Q30 28 62 31V34H0z" fill="#2B4A69"/><rect x="1.3" y="1.2" width="58.8" height="31.6" fill="none" stroke="#333" stroke-width="0.8"/><rect x="23.9" y="2.6" width="14.2" height="1.6" fill="#fff"/><rect x="27.5" y="6.3" width="16.8" height="4.6" fill="#F2F2F2" stroke="#222" stroke-width="0.8"/><rect x="29" y="7.8" width="13" height="1.6" fill="#E08AA8"/><path d="M48.2 13.9l-2.5 6 2-0.5 1.2 1.8 2.5-6zM53.2 13.9l2.5 6-2 -0.5-1.2 1.8-2.5-6z" fill="#E8C27A"/><circle cx="50.7" cy="10.9" r="5" fill="#C9A452"/><circle cx="50.7" cy="10.9" r="3.50" fill="#E6CD8A"/><rect x="49.5" y="9.700000000000001" width="2.4" height="2.4" fill="#444"/><rect x="20" y="13.8" width="21" height="1.8" fill="#2A3550"/><rect x="21" y="17.2" width="19" height="0.6" fill="#CCC"/><rect x="25.2" y="22.5" width="10.7" height="0.6" fill="#8899AA"/></svg>
<div class="t" style="left:13.50px;top:337.64px;font-size:14px;color:#D24726;font-weight:normal;font-style:normal;font-family:'Liberation Sans',sans-serif;letter-spacing:-0.286px;">4</div>
<div class="a" style="left:25px;top:337px;width:69px;height:42px;border:3px solid #D24726;background:#fff"></div>
<svg class="a" style="left:29px;top:341px;" width="62" height="34" viewBox="0 0 62 34"><rect width="62" height="34" fill="#F1F1F1"/><path d="M0 0h62v0.5L0 14.6z" fill="#2B4A69"/><path d="M37 7.8L62 1.5V15.2z" fill="#A9C1DA"/><path d="M0 14.6L62 0.6" stroke="#E6C45A" stroke-width="0.9"/><rect x="1.5" y="1" width="59" height="32" fill="none" stroke="#444" stroke-width="0.8"/><rect x="24" y="2.4" width="14" height="1.6" fill="#fff"/><rect x="20" y="14" width="20" height="1.8" fill="#2A3550"/><rect x="20" y="16.3" width="20" height="0.5" fill="#555"/><rect x="20" y="17.5" width="20" height="0.6" fill="#CCC"/><rect x="9.5" y="24" width="10.5" height="1.8" fill="#2A3550"/><rect x="42" y="24" width="10.5" height="1.8" fill="#2A3550"/><path d="M28.0 27l-2.5 6 2-0.5 1.2 1.8 2.5-6zM33.0 27l2.5 6-2 -0.5-1.2 1.8-2.5-6z" fill="#E8C27A"/><circle cx="30.5" cy="24" r="4.8" fill="#C9A452"/><circle cx="30.5" cy="24" r="3.36" fill="#E6CD8A"/><rect x="29.3" y="22.8" width="2.4" height="2.4" fill="#444"/></svg>
<div class="t" style="left:13.50px;top:393.64px;font-size:14px;color:#444;font-weight:normal;font-style:normal;font-family:'Liberation Sans',sans-serif;letter-spacing:-0.286px;">5</div>
<div class="a" style="left:27px;top:395px;width:65px;height:38px;border:1px solid #C6C6C6;background:#fff"></div>
<svg class="a" style="left:29px;top:397px;" width="62" height="34" viewBox="0 0 62 34"><defs><linearGradient id="t5" x1="0" y1="0" x2="0" y2="1"><stop offset="0" stop-color="#17335C"/><stop offset="1" stop-color="#3C6EA8"/></linearGradient></defs><rect width="62" height="34" fill="#F1F1F1"/><path d="M0 0h62v14.7L50 9.9 30 16 11 9.9 0 14.7z" fill="url(#t5)"/><path d="M0 2.5L11 9.9 0 14.7zM62 2.5L50 9.9 62 14.7z" fill="#222"/><path d="M0 5.5L30 15.8 62 5.5" fill="none" stroke="#D9B24A" stroke-width="0.9" stroke-dasharray="1.6 1"/><rect x="24" y="1.5" width="14" height="0.8" fill="#BFD0F0"/><circle cx="30" cy="8.9" r="5.3" fill="#C9A452"/><circle cx="30" cy="8.9" r="3.71" fill="#E6CD8A"/><rect x="28.8" y="7.7" width="2.4" height="2.4" fill="#444"/><rect x="23" y="17.4" width="16" height="0.6" fill="#CCC"/><rect x="22" y="21" width="19.7" height="2.2" fill="#2A4A8A"/><rect x="21" y="23.6" width="21" height="0.6" fill="#777"/><rect x="23" y="25.4" width="16" height="0.6" fill="#CCC"/><rect x="19.7" y="29.3" width="21.3" height="3.2" fill="#1A1A1A" opacity="0.85"/></svg>
<div class="t" style="left:13.50px;top:449.64px;font-size:14px;color:#444;font-weight:normal;font-style:normal;font-family:'Liberation Sans',sans-serif;letter-spacing:-0.286px;">6</div>
<div class="a" style="left:27px;top:451px;width:65px;height:38px;border:1px solid #C6C6C6;background:#fff"></div>
<svg class="a" style="left:29px;top:453px;" width="62" height="34" viewBox="0 0 62 34"><rect width="62" height="34" fill="#FFFFFF"/><path d="M0 0h62v4.5L31 13 0 4.5z" fill="#222"/><path d="M0 4.5L31 13 62 4.5" fill="none" stroke="#D9B24A" stroke-width="0.8"/><rect x="23" y="1.6" width="16" height="1.4" fill="#fff"/><g fill="none" stroke="#EBEBEB" stroke-width="1.5"><path d="M20 14c-6 4-6 12 2 16M42 14c6 4 6 12-2 16"/></g><path d="M26.8 17h7.1v6l-3.5-1.8-3.6 1.8z" fill="#222"/><circle cx="30.3" cy="13.8" r="5.3" fill="#C9A452"/><circle cx="30.3" cy="13.8" r="3.71" fill="#E6CD8A"/><rect x="29.1" y="12.600000000000001" width="2.4" height="2.4" fill="#444"/><rect x="21" y="25.4" width="20" height="2" fill="#2A4A8A"/><rect x="19" y="28.2" width="23.3" height="1" fill="#222"/><rect x="13.6" y="32" width="7" height="0.6" fill="#999"/><rect x="41" y="32" width="7" height="0.6" fill="#999"/></svg>
<div class="t" style="left:13.50px;top:505.64px;font-size:14px;color:#444;font-weight:normal;font-style:normal;font-family:'Liberation Sans',sans-serif;letter-spacing:-0.286px;">7</div>
<div class="a" style="left:27px;top:507px;width:65px;height:38px;border:1px solid #C6C6C6;background:#fff"></div>
<svg class="a" style="left:29px;top:509px;" width="62" height="34" viewBox="0 0 62 34"><defs><linearGradient id="t7" x1="0" y1="0" x2="0" y2="1"><stop offset="0" stop-color="#5E93C8"/><stop offset="1" stop-color="#2F6199"/></linearGradient></defs><rect width="62" height="34" fill="url(#t7)"/><path d="M0 0h62v4.5L31 13 0 4.5z" fill="#222"/><path d="M0 4.5L31 13 62 4.5" fill="none" stroke="#D9B24A" stroke-width="0.8" stroke-dasharray="1.6 1"/><rect x="23" y="1.6" width="16" height="1.4" fill="#fff"/><path d="M26.8 17h7.1v6l-3.5-1.8-3.6 1.8z" fill="#222"/><circle cx="30.3" cy="13.8" r="5.3" fill="#C9A452"/><circle cx="30.3" cy="13.8" r="3.71" fill="#E6CD8A"/><rect x="29.1" y="12.600000000000001" width="2.4" height="2.4" fill="#444"/><rect x="21" y="25.4" width="20" height="2" fill="#E8EEF8"/><rect x="19" y="28.2" width="23.3" height="1" fill="#111"/><rect x="22" y="30" width="18" height="0.6" fill="#335"/></svg>
<svg class="a" style="left:11px;top:188px;" width="11" height="10" viewBox="0 0 11 10"><path d="M5.5 0l1.4 3.6 3.9.2-3 2.5 1 3.7-3.3-2.1-3.3 2.1 1-3.7-3-2.5 3.9-.2z" fill="#555"/></svg>
<div class="a" style="left:1020px;top:153px;width:15px;height:487px;background:#DCDCDC"></div>
<div class="a" style="left:1020px;top:155px;width:14px;height:14px;background:#fff;border:1px solid #ABABAB"></div>
<svg class="a" style="left:1023px;top:159px;" width="8" height="6" viewBox="0 0 8 6"><path d="M0.5 5L4 1l3.5 4z" fill="#555"/></svg>
<div class="a" style="left:1020px;top:320px;width:14px;height:49px;background:#fff;border:1px solid #ABABAB"></div>
<div class="a" style="left:1020px;top:570px;width:14px;height:14px;background:#fff;border:1px solid #ABABAB"></div>
<svg class="a" style="left:1023px;top:575px;" width="8" height="6" viewBox="0 0 8 6"><path d="M0.5 1L4 5l3.5-4z" fill="#555"/></svg>
<div class="a" style="left:1020px;top:586px;width:15px;height:54px;background:#E6E6E6"></div>
<svg class="a" style="left:1022px;top:588px;" width="10" height="10" viewBox="0 0 10 10"><path d="M1 4.5L5 1l4 3.5M1 9L5 5.5 9 9" fill="#555" stroke="#555" stroke-width="0.8"/></svg>
<svg class="a" style="left:1022px;top:604px;" width="10" height="10" viewBox="0 0 10 10"><path d="M1 1l4 3.5L9 1M1 5.5L5 9l4-3.5" fill="#555" stroke="#555" stroke-width="0.8"/></svg>
<div class="a" style="left:153px;top:162px;width:829px;height:466px;background:#D0D0D0"></div>
<svg class="a" style="left:153px;top:162px;overflow:hidden !important" width="828" height="465" viewBox="0 0 828 465"><defs>
<linearGradient id="gTop" x1="0" y1="0" x2="0" y2="1"><stop offset="0" stop-color="#2C4B6B"/><stop offset="1" stop-color="#2A4867"/></linearGradient><linearGradient id="gShade" gradientUnits="userSpaceOnUse" x1="0" y1="0" x2="6" y2="25"><stop offset="0" stop-color="#000" stop-opacity="0"/><stop offset="1" stop-color="#000" stop-opacity="0.25"/></linearGradient>
<linearGradient id="gWedge" x1="0" y1="0" x2="1" y2="0"><stop offset="0" stop-color="#2D4D6F"/><stop offset="0.5" stop-color="#375A7E"/><stop offset="1" stop-color="#44688E"/></linearGradient>
<linearGradient id="gBandR" x1="0" y1="0" x2="1" y2="0"><stop offset="0" stop-color="#1E3247"/><stop offset="0.4" stop-color="#2E4862"/><stop offset="1" stop-color="#3A5878"/></linearGradient>
<linearGradient id="gLB" x1="0" y1="0" x2="1" y2="0"><stop offset="0" stop-color="#CAD7E4"/><stop offset="0.4" stop-color="#B3C8DE"/><stop offset="1" stop-color="#9BB7D5"/></linearGradient>
<linearGradient id="gGold" x1="0" y1="0" x2="1" y2="0"><stop offset="0" stop-color="#D8B850"/><stop offset="0.25" stop-color="#F0CE62"/><stop offset="1" stop-color="#F4D265"/></linearGradient>
<linearGradient id="gSerr" x1="0.2" y1="0" x2="0.6" y2="1"><stop offset="0" stop-color="#E8CC7E"/><stop offset="0.35" stop-color="#D2AE5A"/><stop offset="0.7" stop-color="#B18F45"/><stop offset="1" stop-color="#8A6E35"/></linearGradient>
<linearGradient id="gRim" x1="0" y1="0" x2="0.3" y2="1"><stop offset="0" stop-color="#F6E8B8"/><stop offset="0.5" stop-color="#E8D49A"/><stop offset="1" stop-color="#BBA56C"/></linearGradient>
<linearGradient id="gRing" x1="0" y1="0" x2="0.25" y2="1"><stop offset="0" stop-color="#E4CF98"/><stop offset="0.4" stop-color="#C9B47C"/><stop offset="0.75" stop-color="#978255"/><stop offset="1" stop-color="#7A6840"/></linearGradient>
<radialGradient id="gDisc" cx="0.45" cy="0.4" r="0.65"><stop offset="0" stop-color="#FBEBB8"/><stop offset="0.7" stop-color="#EED592"/><stop offset="1" stop-color="#C9A75C"/></radialGradient>
<linearGradient id="gRib" x1="0" y1="0" x2="0" y2="1"><stop offset="0" stop-color="#9C7D38"/><stop offset="0.35" stop-color="#F2D98C"/><stop offset="0.65" stop-color="#E4AC5C"/><stop offset="1" stop-color="#F0C878"/></linearGradient>
<filter id="blur2"><feGaussianBlur stdDeviation="2"/></filter>
<filter id="blur1"><feGaussianBlur stdDeviation="1.2"/></filter>
<path id="arcTop" d="M369,333.5 A44,44 0 0 1 457,333.5"/>
<path id="arcBot" d="M362.5,333.5 A50.5,50.5 0 0 0 463.5,333.5"/>
</defs>
<rect width="828" height="465" fill="#F2F2F2"/>
<g fill="none" stroke="#000" stroke-opacity="0.03" stroke-width="0.8"><circle cx="387" cy="548" r="60"/><circle cx="387" cy="548" r="77"/><circle cx="387" cy="548" r="94"/><circle cx="387" cy="548" r="111"/><circle cx="387" cy="548" r="128"/><circle cx="387" cy="548" r="145"/><circle cx="387" cy="548" r="162"/><circle cx="387" cy="548" r="179"/><circle cx="387" cy="548" r="196"/><circle cx="387" cy="548" r="213"/><circle cx="387" cy="548" r="230"/><circle cx="387" cy="548" r="247"/><circle cx="387" cy="548" r="264"/><circle cx="387" cy="548" r="281"/><circle cx="387" cy="548" r="298"/><circle cx="387" cy="548" r="315"/><circle cx="387" cy="548" r="332"/><circle cx="387" cy="548" r="349"/><circle cx="387" cy="548" r="366"/><circle cx="387" cy="548" r="383"/><circle cx="387" cy="548" r="400"/><circle cx="387" cy="548" r="417"/><circle cx="387" cy="548" r="434"/><circle cx="387" cy="548" r="451"/><circle cx="387" cy="548" r="468"/><circle cx="387" cy="548" r="485"/><circle cx="387" cy="548" r="502"/><circle cx="387" cy="548" r="519"/><circle cx="387" cy="548" r="536"/><circle cx="387" cy="548" r="553"/><circle cx="387" cy="548" r="570"/><circle cx="387" cy="548" r="587"/><circle cx="387" cy="548" r="604"/><circle cx="387" cy="548" r="621"/><circle cx="387" cy="548" r="638"/><circle cx="387" cy="548" r="655"/><circle cx="387" cy="548" r="672"/><circle cx="387" cy="548" r="689"/><circle cx="387" cy="548" r="706"/><circle cx="387" cy="548" r="723"/><circle cx="387" cy="548" r="740"/><circle cx="387" cy="548" r="757"/><circle cx="387" cy="548" r="774"/><circle cx="387" cy="548" r="791"/><circle cx="387" cy="548" r="808"/><circle cx="387" cy="548" r="825"/><circle cx="387" cy="548" r="842"/><circle cx="387" cy="548" r="859"/><circle cx="387" cy="548" r="876"/><circle cx="387" cy="548" r="893"/></g>
<polygon points="0,0 828,0 0,196.4" fill="url(#gTop)"/>
<polygon points="177.6,0 828,0 452.6,89.1" fill="url(#gWedge)"/>
<polygon points="0,207.5 828,24.5 828,34 0,214" fill="#000" opacity="0.18" filter="url(#blur2)"/>
<polygon points="0,186 790,0 828,0 0,196.4" fill="#000" opacity="0.10" filter="url(#blur2)"/>
<polygon points="0,196.4 828,0 828,10.2 0,206" fill="#000"/>
<polygon points="452.6,89.1 828,0 828,10.2 468.9,95.2" fill="url(#gBandR)"/>
<polygon points="0,206 828,10.2 828,25.2 0,207.8" fill="url(#gGold)"/>
<polygon points="486.2,100 828,24.5 828,210.7" fill="url(#gLB)"/>
<polygon points="486.2,100 828,24.5 828,29 490,102" fill="#000" opacity="0.12" filter="url(#blur1)"/>
<rect x="19.5" y="16.8" width="791" height="431.5" fill="none" stroke="#000" stroke-width="1.4"/>
<!-- underlines -->
<rect x="274" y="214.8" width="275" height="1.2" fill="#111"/>
<rect x="125.5" y="343" width="141" height="1.2" fill="#111"/>
<rect x="563.6" y="343" width="141" height="1.2" fill="#111"/>
<!-- ribbons -->
<g filter="url(#blur2)" opacity="0.35" transform="translate(3,4)">
<polygon points="372.7,386.9 405.8,398.4 390.9,446.1 378.8,426.8 358.9,434.9" fill="#000"/>
<polygon points="418.0,398.4 449.7,387.6 465.2,434.9 444.3,428.1 432.8,445.7" fill="#000"/>
</g>
<polygon points="372.7,386.9 405.8,398.4 390.9,446.1 378.8,426.8 358.9,434.9" fill="url(#gRib)"/>
<polygon points="418.0,398.4 449.7,387.6 465.2,434.9 444.3,428.1 432.8,445.7" fill="url(#gRib)"/>
<!-- seal -->
<circle cx="415" cy="336.5" r="64" fill="#000" opacity="0.25" filter="url(#blur2)"/>
<path d="M478.50,333.50 L475.93,336.50 L478.20,339.73 L475.36,342.47 L477.32,345.90 L474.22,348.35 L475.85,351.95 L472.54,354.11 L473.81,357.84 L470.31,359.67 L471.22,363.51 L467.56,365.00 L468.10,368.91 L464.32,370.04 L464.49,373.99 L460.61,374.76 L460.40,378.70 L456.47,379.10 L455.89,383.00 L451.94,383.02 L450.99,386.85 L447.06,386.50 L445.75,390.22 L441.87,389.50 L440.21,393.08 L436.41,391.99 L434.42,395.40 L430.75,393.95 L428.44,397.15 L424.92,395.36 L422.32,398.33 L418.99,396.21 L416.12,398.93 L413.00,396.50 L409.88,398.93 L407.01,396.21 L403.68,398.33 L401.08,395.36 L397.56,397.15 L395.25,393.95 L391.58,395.40 L389.59,391.99 L385.79,393.08 L384.13,389.50 L380.25,390.22 L378.94,386.50 L375.01,386.85 L374.06,383.02 L370.11,383.00 L369.53,379.10 L365.60,378.70 L365.39,374.76 L361.51,373.99 L361.68,370.04 L357.90,368.91 L358.44,365.00 L354.78,363.51 L355.69,359.67 L352.19,357.84 L353.46,354.11 L350.15,351.95 L351.78,348.35 L348.68,345.90 L350.64,342.47 L347.80,339.73 L350.07,336.50 L347.50,333.50 L350.07,330.50 L347.80,327.27 L350.64,324.53 L348.68,321.10 L351.78,318.65 L350.15,315.05 L353.46,312.89 L352.19,309.16 L355.69,307.33 L354.78,303.49 L358.44,302.00 L357.90,298.09 L361.68,296.96 L361.51,293.01 L365.39,292.24 L365.60,288.30 L369.53,287.90 L370.11,284.00 L374.06,283.98 L375.01,280.15 L378.94,280.50 L380.25,276.78 L384.13,277.50 L385.79,273.92 L389.59,275.01 L391.58,271.60 L395.25,273.05 L397.56,269.85 L401.08,271.64 L403.68,268.67 L407.01,270.79 L409.88,268.07 L413.00,270.50 L416.12,268.07 L418.99,270.79 L422.32,268.67 L424.92,271.64 L428.44,269.85 L430.75,273.05 L434.42,271.60 L436.41,275.01 L440.21,273.92 L441.87,277.50 L445.75,276.78 L447.06,280.50 L450.99,280.15 L451.94,283.98 L455.89,284.00 L456.47,287.90 L460.40,288.30 L460.61,292.24 L464.49,293.01 L464.32,296.96 L468.10,298.09 L467.56,302.00 L471.22,303.49 L470.31,307.33 L473.81,309.16 L472.54,312.89 L475.85,315.05 L474.22,318.65 L477.32,321.10 L475.36,324.53 L478.20,327.27 L475.93,330.50Z" fill="url(#gSerr)"/>
<circle cx="413" cy="333.5" r="56" fill="url(#gRim)"/>
<circle cx="413" cy="333.5" r="54.5" fill="url(#gRing)"/>
<circle cx="413" cy="333.5" r="39.5" fill="#E8D69E"/>
<circle cx="413" cy="333.5" r="38" fill="#7A6535"/>
<circle cx="413" cy="333.5" r="37" fill="url(#gDisc)"/>
<text font-family="Liberation Sans" font-weight="bold" font-size="11" fill="#111"><textPath href="#arcTop" startOffset="50%" text-anchor="middle" textLength="92" lengthAdjust="spacingAndGlyphs">YOUR TEXT HERE</textPath></text>
<text font-family="Liberation Sans" font-weight="bold" font-size="10" fill="#F4E6BE"><textPath href="#arcBot" startOffset="50%" text-anchor="middle" textLength="150" lengthAdjust="spacingAndGlyphs">MORE TEXT HERE IF YOU WANT</textPath></text>
<g font-family="Liberation Sans" font-weight="bold" fill="#111" text-anchor="middle">
<text x="0" y="0" font-size="11.5" transform="translate(413,316.6) scale(0.75,1)" letter-spacing="1.2" stroke="#111" stroke-width="0.6">AWARD</text>
<text x="0" y="0" font-size="21.5" transform="translate(413,334.4) scale(0.76,1)" stroke="#111" stroke-width="1.4">INFO</text>
<text x="0" y="0" font-size="12.3" transform="translate(413,346.6) scale(0.7,1)" letter-spacing="1" stroke="#111" stroke-width="0.6">DESIGN</text>
</g>
<polygon points="413.40,349.00 415.00,353.29 419.58,353.49 416.00,356.34 417.22,360.76 413.40,358.23 409.58,360.76 410.80,356.34 407.22,353.49 411.80,353.29" fill="#111"/><polygon points="399.50,352.60 400.54,355.37 403.49,355.50 401.18,357.35 401.97,360.20 399.50,358.56 397.03,360.20 397.82,357.35 395.51,355.50 398.46,355.37" fill="#111"/><polygon points="427.30,352.60 428.34,355.37 431.29,355.50 428.98,357.35 429.77,360.20 427.30,358.56 424.83,360.20 425.62,357.35 423.31,355.50 426.26,355.37" fill="#111"/></svg>
<div class="a" style="left:152px;top:162px;width:1px;height:207px;background:#F2F2F2"></div>
<div class="a" style="left:153px;top:169px;width:1px;height:200px;background:#1E2A38"></div>
<div class="t" style="left:473.80px;top:187.93px;font-size:37.4px;color:#fff;font-weight:bold;font-style:normal;font-family:'Liberation Sans',sans-serif;letter-spacing:0.000px;transform-origin:0 0;transform:scaleX(0.7677);-webkit-text-stroke:0.6px #fff">CERTIFICATE</div>
<div class="t" style="left:509.20px;top:224.40px;font-size:12.4px;color:#fff;font-weight:bold;font-style:normal;font-family:'Liberation Sans',sans-serif;letter-spacing:-0.279px;">OF APPRECIATION</div>
<svg class="a" style="left:0px;top:0px;pointer-events:none" width="1037" height="666" viewBox="0 0 1037 666"><g fill="none" stroke="#2B4A6B" stroke-linecap="round" stroke-linejoin="round"><path d="M428.5,348 C432,343 440,338.5 449,338.5" stroke-width="5.5"/><path d="M449,338.5 L434.5,367.5" stroke-width="6"/><path d="M448.5,340 L450,371" stroke-width="4.5"/><path d="M450,371 L463.5,341" stroke-width="6"/><path d="M476,353 C472,350 466,352 462,358 C459,363 459.5,370 463,370.5 C466,371 471,364 476,353" stroke-width="4.2"/><path d="M476.5,352.5 L472.5,368.5 C472,371 474.5,371 477,369.5" stroke-width="5.5"/><path d="M477,369 C478.5,362 480,356 482,353" stroke-width="3"/><path d="M481.5,353.5 C484,350.5 488.5,350.5 487.5,355 L483.5,369" stroke-width="5.5"/><path d="M486.5,356 C489.5,351.5 494,350.5 497,352.5 L493,369" stroke-width="5.5"/><path d="M496,357 C499,351.5 503.5,350.5 505.5,353 L502.5,365 C501.5,370 504.5,371 508,368.5" stroke-width="5.5"/><path d="M507,366.5 C513,363.5 519,361 524.5,357.5" stroke-width="3"/><path d="M524.5,357.5 C529.5,354 528,349 522.5,350 C516,351.5 510.5,358.5 511,364.5 C511.5,370.5 520,371.5 529,363" stroke-width="5"/><path d="M570.5,349.5 C575,347 580,345 579,342.5 C577,340 566,340.5 559,343.5" stroke-width="5.5"/><path d="M559,343.5 C553,346 551.5,351 557,355 C562,358 570,359 571.5,364 C572.5,369 565,371.5 556,371.5" stroke-width="6.2"/><path d="M556,371.5 C549,371.5 544.5,370 546,367.5 C547,366 549,365.5 550.5,365.5" stroke-width="5"/><path d="M587,353.5 L580.5,366 C579,370 584,371 588,368.5" stroke-width="5.8"/><path d="M588,368.5 L595,352" stroke-width="3.5"/><path d="M595,352 L589.5,368 C589,371 592,371 594,369.5" stroke-width="5.8"/><path d="M597.5,357 C600,353.5 605,351.5 611,351.5" stroke-width="5.2"/><path d="M607.5,352.5 L603.5,369" stroke-width="5.8"/><path d="M605,367 C609,362 614,357 619.5,353.8" stroke-width="3"/><path d="M619.5,353.8 L613,369.3" stroke-width="5.8"/><path d="M617,357.5 C621,352.5 628,350.5 634,352.5 L625,370" stroke-width="5.8"/><path d="M648,352.5 C644,350 637.5,352 633.5,358 C630.5,363 631,370 634.5,370.5 C637.5,371 643,364 648,353" stroke-width="4.2"/><path d="M648.5,352.5 L645,369" stroke-width="5.5"/><path d="M645.5,369 L653,352.7" stroke-width="3"/><path d="M653,352.7 L648.8,369.5" stroke-width="5.5"/><path d="M655,354 C657,351 662,351 664,353.3 L658.5,368.9" stroke-width="5.5"/><path d="M665,355 C667,352 672,351 675,353.9 L670,366.5 C669,371 673,371 677.4,366.6" stroke-width="5.5"/><path d="M678,366 C685,363 693,360 699.5,356.5" stroke-width="3"/><path d="M699.5,356.5 C704.5,353 703,349 697.5,350.2 C691,351.8 686,358 686,363.5 C686,370 694,371.5 702.3,362" stroke-width="5"/></g></svg>
<svg class="a" style="left:0px;top:0px;" width="1037" height="666" viewBox="0 0 1037 666"><g transform="translate(284.5,485) scale(0.487) translate(-428,-338)" fill="none" stroke="#2B4A6B" stroke-linecap="round" stroke-linejoin="round"><path d="M428.5,348 C432,343 440,338.5 449,338.5" stroke-width="6.49"/><path d="M449,338.5 L434.5,367.5" stroke-width="7.08"/><path d="M448.5,340 L450,371" stroke-width="5.31"/><path d="M450,371 L463.5,341" stroke-width="7.08"/><path d="M476,353 C472,350 466,352 462,358 C459,363 459.5,370 463,370.5 C466,371 471,364 476,353" stroke-width="4.96"/><path d="M476.5,352.5 L472.5,368.5 C472,371 474.5,371 477,369.5" stroke-width="6.49"/><path d="M477,369 C478.5,362 480,356 482,353" stroke-width="3.54"/><path d="M481.5,353.5 C484,350.5 488.5,350.5 487.5,355 L483.5,369" stroke-width="6.49"/><path d="M486.5,356 C489.5,351.5 494,350.5 497,352.5 L493,369" stroke-width="6.49"/><path d="M496,357 C499,351.5 503.5,350.5 505.5,353 L502.5,365 C501.5,370 504.5,371 508,368.5" stroke-width="6.49"/><path d="M507,366.5 C513,363.5 519,361 524.5,357.5" stroke-width="3.54"/><path d="M524.5,357.5 C529.5,354 528,349 522.5,350 C516,351.5 510.5,358.5 511,364.5 C511.5,370.5 520,371.5 529,363" stroke-width="5.90"/><path d="M570.5,349.5 C575,347 580,345 579,342.5 C577,340 566,340.5 559,343.5" stroke-width="6.49"/><path d="M559,343.5 C553,346 551.5,351 557,355 C562,358 570,359 571.5,364 C572.5,369 565,371.5 556,371.5" stroke-width="7.32"/><path d="M556,371.5 C549,371.5 544.5,370 546,367.5 C547,366 549,365.5 550.5,365.5" stroke-width="5.90"/><path d="M587,353.5 L580.5,366 C579,370 584,371 588,368.5" stroke-width="6.84"/><path d="M588,368.5 L595,352" stroke-width="4.13"/><path d="M595,352 L589.5,368 C589,371 592,371 594,369.5" stroke-width="6.84"/><path d="M597.5,357 C600,353.5 605,351.5 611,351.5" stroke-width="6.14"/><path d="M607.5,352.5 L603.5,369" stroke-width="6.84"/><path d="M605,367 C609,362 614,357 619.5,353.8" stroke-width="3.54"/><path d="M619.5,353.8 L613,369.3" stroke-width="6.84"/><path d="M617,357.5 C621,352.5 628,350.5 634,352.5 L625,370" stroke-width="6.84"/><path d="M648,352.5 C644,350 637.5,352 633.5,358 C630.5,363 631,370 634.5,370.5 C637.5,371 643,364 648,353" stroke-width="4.96"/><path d="M648.5,352.5 L645,369" stroke-width="6.49"/><path d="M645.5,369 L653,352.7" stroke-width="3.54"/><path d="M653,352.7 L648.8,369.5" stroke-width="6.49"/><path d="M655,354 C657,351 662,351 664,353.3 L658.5,368.9" stroke-width="6.49"/><path d="M665,355 C667,352 672,351 675,353.9 L670,366.5 C669,371 673,371 677.4,366.6" stroke-width="6.49"/><path d="M678,366 C685,363 693,360 699.5,356.5" stroke-width="3.54"/><path d="M699.5,356.5 C704.5,353 703,349 697.5,350.2 C691,351.8 686,358 686,363.5 C686,370 694,371.5 702.3,362" stroke-width="5.90"/></g></svg>
<svg class="a" style="left:0px;top:0px;" width="1037" height="666" viewBox="0 0 1037 666"><g transform="translate(725.5,484.5) scale(0.487) translate(-428,-338)" fill="none" stroke="#2B4A6B" stroke-linecap="round" stroke-linejoin="round"><path d="M428.5,348 C432,343 440,338.5 449,338.5" stroke-width="6.49"/><path d="M449,338.5 L434.5,367.5" stroke-width="7.08"/><path d="M448.5,340 L450,371" stroke-width="5.31"/><path d="M450,371 L463.5,341" stroke-width="7.08"/><path d="M476,353 C472,350 466,352 462,358 C459,363 459.5,370 463,370.5 C466,371 471,364 476,353" stroke-width="4.96"/><path d="M476.5,352.5 L472.5,368.5 C472,371 474.5,371 477,369.5" stroke-width="6.49"/><path d="M477,369 C478.5,362 480,356 482,353" stroke-width="3.54"/><path d="M481.5,353.5 C484,350.5 488.5,350.5 487.5,355 L483.5,369" stroke-width="6.49"/><path d="M486.5,356 C489.5,351.5 494,350.5 497,352.5 L493,369" stroke-width="6.49"/><path d="M496,357 C499,351.5 503.5,350.5 505.5,353 L502.5,365 C501.5,370 504.5,371 508,368.5" stroke-width="6.49"/><path d="M507,366.5 C513,363.5 519,361 524.5,357.5" stroke-width="3.54"/><path d="M524.5,357.5 C529.5,354 528,349 522.5,350 C516,351.5 510.5,358.5 511,364.5 C511.5,370.5 520,371.5 529,363" stroke-width="5.90"/><path d="M570.5,349.5 C575,347 580,345 579,342.5 C577,340 566,340.5 559,343.5" stroke-width="6.49"/><path d="M559,343.5 C553,346 551.5,351 557,355 C562,358 570,359 571.5,364 C572.5,369 565,371.5 556,371.5" stroke-width="7.32"/><path d="M556,371.5 C549,371.5 544.5,370 546,367.5 C547,366 549,365.5 550.5,365.5" stroke-width="5.90"/><path d="M587,353.5 L580.5,366 C579,370 584,371 588,368.5" stroke-width="6.84"/><path d="M588,368.5 L595,352" stroke-width="4.13"/><path d="M595,352 L589.5,368 C589,371 592,371 594,369.5" stroke-width="6.84"/><path d="M597.5,357 C600,353.5 605,351.5 611,351.5" stroke-width="6.14"/><path d="M607.5,352.5 L603.5,369" stroke-width="6.84"/><path d="M605,367 C609,362 614,357 619.5,353.8" stroke-width="3.54"/><path d="M619.5,353.8 L613,369.3" stroke-width="6.84"/><path d="M617,357.5 C621,352.5 628,350.5 634,352.5 L625,370" stroke-width="6.84"/><path d="M648,352.5 C644,350 637.5,352 633.5,358 C630.5,363 631,370 634.5,370.5 C637.5,371 643,364 648,353" stroke-width="4.96"/><path d="M648.5,352.5 L645,369" stroke-width="6.49"/><path d="M645.5,369 L653,352.7" stroke-width="3.54"/><path d="M653,352.7 L648.8,369.5" stroke-width="6.49"/><path d="M655,354 C657,351 662,351 664,353.3 L658.5,368.9" stroke-width="6.49"/><path d="M665,355 C667,352 672,351 675,353.9 L670,366.5 C669,371 673,371 677.4,366.6" stroke-width="6.49"/><path d="M678,366 C685,363 693,360 699.5,356.5" stroke-width="3.54"/><path d="M699.5,356.5 C704.5,353 703,349 697.5,350.2 C691,351.8 686,358 686,363.5 C686,370 694,371.5 702.3,362" stroke-width="5.90"/></g></svg>
<div class="t" style="left:421.90px;top:381.86px;font-size:8.2px;color:#111;font-weight:bold;font-style:normal;font-family:'Liberation Sans',sans-serif;letter-spacing:0.509px;-webkit-text-stroke:0.25px #111">This is copy/text used to describe anything you would like for this</div>
<div class="t" style="left:425.80px;top:392.06px;font-size:8.2px;color:#111;font-weight:bold;font-style:normal;font-family:'Liberation Sans',sans-serif;letter-spacing:0.546px;-webkit-text-stroke:0.25px #111">area. You can do what you like for this area. Copy, Delete, Paste</div>
<div class="t" style="left:459.80px;top:402.56px;font-size:8.2px;color:#111;font-weight:bold;font-style:normal;font-family:'Liberation Sans',sans-serif;letter-spacing:0.526px;-webkit-text-stroke:0.25px #111">and of the text in this area. Your copy goes here.</div>
<div class="t" style="left:309.80px;top:512.29px;font-size:11px;color:#111;font-weight:bold;font-style:italic;font-family:'Liberation Sans',sans-serif;letter-spacing:-0.047px;">President</div>
<div class="t" style="left:748.20px;top:511.49px;font-size:11px;color:#111;font-weight:bold;font-style:italic;font-family:'Liberation Sans',sans-serif;letter-spacing:-0.043px;">Vice President</div>
<div class="a" style="left:1px;top:643px;width:1035px;height:22px;background:#F1F1F1;border-top:1px solid #C6C6C6"></div>
<div class="t" style="left:8.50px;top:647.84px;font-size:12px;color:#444;font-weight:normal;font-style:normal;font-family:'Liberation Sans',sans-serif;letter-spacing:-0.337px;">Slide 4 of 7</div>
<svg class="a" style="left:519px;top:647px;" width="13" height="14" viewBox="0 0 13 14"><path d="M6.5 0.5l3 3h-6z" fill="#666"/><path d="M1 6h11M1 9h11M3 12h9" stroke="#666" stroke-width="1.2"/></svg>
<div class="t" style="left:536.20px;top:647.54px;font-size:12px;color:#444;font-weight:normal;font-style:normal;font-family:'Liberation Sans',sans-serif;letter-spacing:-0.409px;">Notes</div>
<svg class="a" style="left:586px;top:647px;" width="13" height="14" viewBox="0 0 13 14"><path d="M0.5 0.5h12v9h-7l-3 3.5v-3.5h-2z" fill="#666"/></svg>
<div class="t" style="left:603.50px;top:647.54px;font-size:12px;color:#444;font-weight:normal;font-style:normal;font-family:'Liberation Sans',sans-serif;letter-spacing:-0.627px;">Comments</div>
<div class="a" style="left:676px;top:644px;width:38px;height:21px;background:#C6C6C6"></div>
<svg class="a" style="left:688px;top:647px;" width="15" height="13" viewBox="0 0 15 13"><rect x="0.6" y="0.6" width="13.8" height="11.8" fill="none" stroke="#666" stroke-width="1.2"/><path d="M3.5 1v11M3.5 9h11" stroke="#666" stroke-width="1.2"/><rect x="6" y="3" width="6" height="4" fill="none" stroke="#666" stroke-width="1"/></svg>
<svg class="a" style="left:726px;top:647px;" width="15" height="13" viewBox="0 0 15 13"><rect x="0.6" y="0.6" width="5.5" height="4.8" fill="none" stroke="#666" stroke-width="1.2"/><rect x="8.6" y="0.6" width="5.5" height="4.8" fill="none" stroke="#666" stroke-width="1.2"/><rect x="0.6" y="7.6" width="5.5" height="4.8" fill="none" stroke="#666" stroke-width="1.2"/><rect x="8.6" y="7.6" width="5.5" height="4.8" fill="none" stroke="#666" stroke-width="1.2"/></svg>
<svg class="a" style="left:763px;top:647px;" width="15" height="14" viewBox="0 0 15 14"><path d="M0.6 1.5c2-1 4.5-1 6.9 0.5 2.4-1.5 4.9-1.5 6.9-0.5v10.5c-2-1-4.5-1-6.9 0.5-2.4-1.5-4.9-1.5-6.9-0.5z" fill="none" stroke="#666" stroke-width="1.1"/><path d="M7.5 2v10.5M2.5 4h3M2.5 6.5h3M2.5 9h3M9.5 4h3M9.5 6.5h3M9.5 9h3" stroke="#666" stroke-width="0.9"/></svg>
<svg class="a" style="left:801px;top:647px;" width="14" height="14" viewBox="0 0 14 14"><path d="M0 1h14" stroke="#666" stroke-width="1.5"/><rect x="1.5" y="1.5" width="11" height="6" fill="none" stroke="#666" stroke-width="1.1"/><path d="M7 7.5v4M4 12.5h6" stroke="#666" stroke-width="1.2"/></svg>
<div class="a" style="left:833px;top:653px;width:6px;height:2px;background:#555"></div>
<div class="a" style="left:843px;top:653px;width:100px;height:1px;background:#A0A0A0"></div>
<div class="a" style="left:873px;top:648px;width:4px;height:11px;background:#5A5A5A"></div>
<div class="a" style="left:893px;top:650px;width:1px;height:7px;background:#A0A0A0"></div>
<svg class="a" style="left:946px;top:649px;" width="9" height="9" viewBox="0 0 9 9"><path d="M4.5 0v9M0 4.5h9" stroke="#555" stroke-width="2"/></svg>
<div class="t" style="left:970.30px;top:647.54px;font-size:12px;color:#444;font-weight:normal;font-style:normal;font-family:'Liberation Sans',sans-serif;letter-spacing:-1.206px;">65%</div>
<svg class="a" style="left:1005px;top:647px;" width="13" height="14" viewBox="0 0 13 14"><rect x="0.5" y="0.5" width="12" height="13" fill="none" stroke="#666" stroke-width="1"/><path d="M6.5 2v3M5 3.5l1.5-1.5 1.5 1.5M6.5 12V9M5 10.5L6.5 12 8 10.5M2 7h3M3.5 5.5L2 7l1.5 1.5M11 7H8M9.5 5.5L11 7 9.5 8.5" fill="none" stroke="#666" stroke-width="1"/></svg>
<div class="a" style="left:0px;top:0px;width:1px;height:666px;background:#B7472A"></div>
<div class="a" style="left:1036px;top:0px;width:1px;height:666px;background:#B7472A"></div>
<div class="a" style="left:0px;top:665px;width:1037px;height:1px;background:#B7472A"></div>
</body></html>
